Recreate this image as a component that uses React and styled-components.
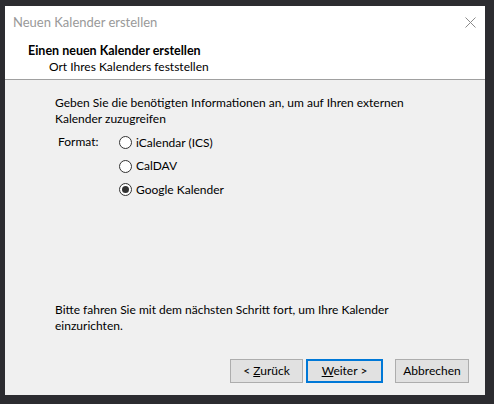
import React from 'react';
import styled, { createGlobalStyle } from 'styled-components';

const GlobalStyle = createGlobalStyle`
  html, body {
    margin: 0;
    background-color: #2c2c30;
  }
  body {
    font-family: Lato, "Noto Sans", sans-serif;
    font-size: 12px;
    color: #000;
  }
`

const Screen = styled.div`
  padding: 6px 0 0 5px;
  height: 398px;
`

const Dialog = styled.div`
  display: flex;
  flex-direction: column;
  width: 480px;
  height: 389px;
  background-color: #f0f0f0;
`

const TitleBar = styled.div`
  display: flex;
  align-items: center;
  justify-content: space-between;
  height: 32px;
  padding: 0 9px 0 8px;
  background-color: #fff;
  color: #999;
  font-size: 13px;
`

const Header = styled.div`
  display: flex;
  flex-direction: column;
  padding: 5px 0 4px 23px;
  background-color: #fff;
  border-bottom: 1px solid #a0a0a0;
  line-height: 16px;
`

const Heading = styled.div`
  font-weight: bold;
  font-size: 12.5px;
`

const SubHeading = styled.div`
  padding-left: 21px;
`

const Body = styled.div`
  display: flex;
  flex-direction: column;
  flex: 1;
  padding: 15px 16px 12px 50px;
  line-height: 16px;
`

const FormatRow = styled.div`
  display: flex;
  margin-top: 4px;
`

const FormatLabel = styled.div`
  width: 61px;
  padding: 3px 0 0 3px;
`

const Options = styled.div`
  display: flex;
  flex-direction: column;
`

const Option = styled.label`
  display: flex;
  align-items: center;
  gap: 4px;
  height: 23.5px;
`

const RadioCircle = styled.span`
  display: flex;
  align-items: center;
  justify-content: center;
  width: 11px;
  height: 11px;
  border: 1px solid #333;
  border-radius: 50%;
  background-color: #fff;

  &::after {
    content: '';
    width: 7px;
    height: 7px;
    border-radius: 50%;
    background-color: ${({ checked }) => (checked ? '#333' : 'transparent')};
  }
`

const Spacer = styled.div`
  flex: 1;
`

const Buttons = styled.div`
  display: flex;
  justify-content: flex-end;
  gap: 3px;
  margin-top: 25px;
`

const Button = styled.div`
  display: flex;
  align-items: center;
  justify-content: center;
  box-sizing: border-box;
  width: ${({ width }) => width}px;
  height: 24px;
  margin-left: ${({ gapBefore }) => (gapBefore ? '9px' : '0')};
  background-color: #e1e1e1;
  border: ${({ primary }) => (primary ? '2px solid #0078d7' : '1px solid #adadad')};
`

const Key = styled.span`
  text-decoration: underline;
`

const CloseIcon = () => (
  <svg width="11" height="11" viewBox="0 0 11 11">
    <path d="M0.5 0.5 L10.5 10.5 M10.5 0.5 L0.5 10.5" stroke="#8a8a8a" strokeWidth="1" fill="none" />
  </svg>
);

const formats = [
  { id: 'ics', label: 'iCalendar (ICS)' },
  { id: 'caldav', label: 'CalDAV' },
  { id: 'google', label: 'Google Kalender' },
];

const App = () => {
  const selected = 'google';

  return (
    <>
      <GlobalStyle />
      <Screen>
        <Dialog>
          <TitleBar>
            <span>Neuen Kalender erstellen</span>
            <CloseIcon />
          </TitleBar>
          <Header>
            <Heading>Einen neuen Kalender erstellen</Heading>
            <SubHeading>Ort Ihres Kalenders feststellen</SubHeading>
          </Header>
          <Body>
            <div>
              Geben Sie die benötigten Informationen an, um auf Ihren externen
              <br />
              Kalender zuzugreifen
            </div>
            <FormatRow>
              <FormatLabel>Format:</FormatLabel>
              <Options>
                {formats.map((f) => (
                  <Option key={f.id}>
                    <RadioCircle checked={f.id === selected} />
                    {f.label}
                  </Option>
                ))}
              </Options>
            </FormatRow>
            <Spacer />
            <div>
              Bitte fahren Sie mit dem nächsten Schritt fort, um Ihre Kalender
              <br />
              einzurichten.
            </div>
            <Buttons>
              <Button width={73}><span>&lt; <Key>Z</Key>urück</span></Button>
              <Button width={77} primary><span><Key>W</Key>eiter &gt;</span></Button>
              <Button width={74} gapBefore>Abbrechen</Button>
            </Buttons>
          </Body>
        </Dialog>
      </Screen>
    </>
  );
};

export default App;
